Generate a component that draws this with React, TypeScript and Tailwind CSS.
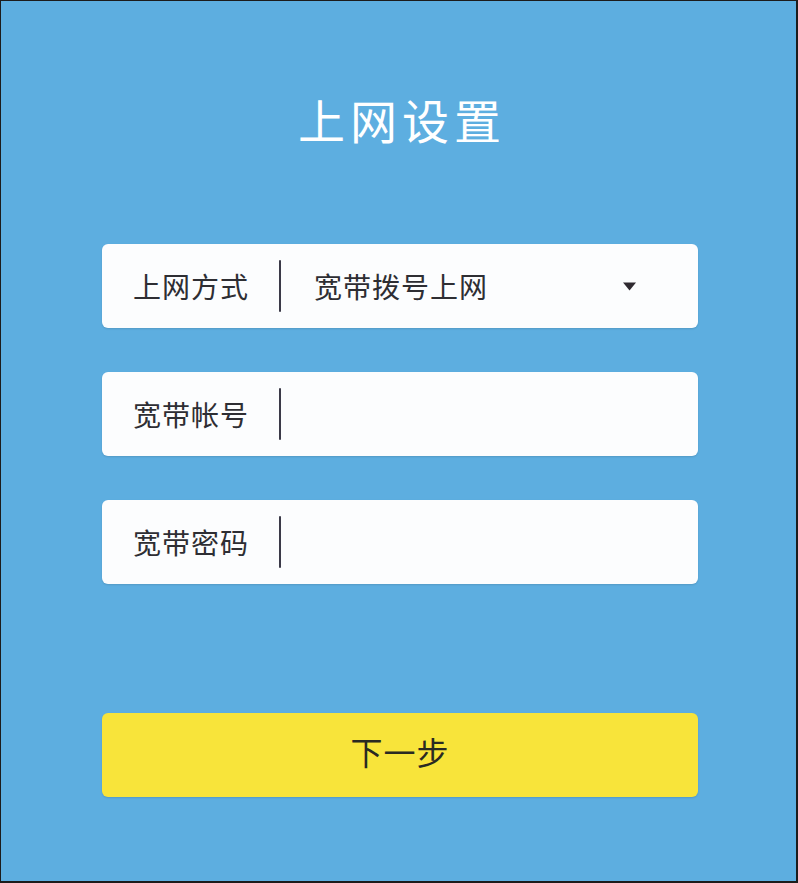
const font = { fontFamily: '"Noto Sans CJK SC", "Noto Sans", sans-serif' };

function Divider() {
  return <span className="ml-[28px] h-[52px] w-[2px] shrink-0 rounded-full bg-[#3b3a48]" />;
}

function Field({ label, children }: { label: string; children?: React.ReactNode }) {
  return (
    <div className="flex h-[84px] items-center rounded-[6px] bg-[#fcfdfe] pl-[31px] pr-[62px] shadow-[0_1px_2px_rgba(0,0,0,0.12)]">
      <span className="w-[118px] shrink-0 text-[28px] leading-none tracking-[1px] text-[#2e2e33]">{label}</span>
      <Divider />
      {children}
    </div>
  );
}

export default function App() {
  return (
    <div
      className="flex h-[883px] w-[798px] flex-col border border-b-2 border-r-2 border-[#1c1c1c] bg-[#5daee0]"
      style={font}
    >
      <h1 className="mt-[94px] pl-[7px] text-center text-[47px] leading-none tracking-[5px] text-white">上网设置</h1>

      <div className="ml-[101px] mr-[98px] mt-[102px] flex flex-col gap-[44px]">
        <Field label="上网方式">
          <span className="ml-[33px] flex-1 text-[28px] leading-none tracking-[1px] text-[#2e2e33]">宽带拨号上网</span>
          <svg width="13" height="9" viewBox="0 0 13 9" className="shrink-0">
            <path d="M0 0.5h13L6.5 8.5z" fill="#2f2a30" />
          </svg>
        </Field>
        <Field label="宽带帐号" />
        <Field label="宽带密码" />
      </div>

      <button className="ml-[101px] mr-[98px] mt-[129px] flex h-[84px] items-center justify-center rounded-[6px] bg-[#f8e43a] pb-[8px] text-[32px] leading-none tracking-[1px] text-[#2a2a22] shadow-[0_1px_2px_rgba(0,0,0,0.12)]">
        下一步
      </button>
    </div>
  );
}
